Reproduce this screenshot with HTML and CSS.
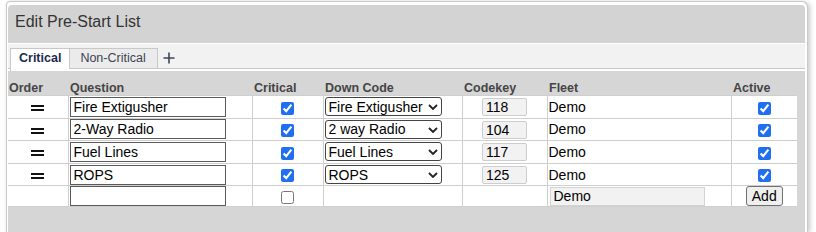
FILE: index.html
```html
<!DOCTYPE html>
<html>
<head>
<meta charset="utf-8">
<title>Edit Pre-Start List</title>
<link rel="stylesheet" href="styles.css">
</head>
<body>
<div class="dialog">
  <div class="titlebar">Edit Pre-Start List</div>
  <div class="tabbar">
    <div class="tab active">Critical</div>
    <div class="tab">Non-Critical</div>
    <div class="add-tab">
      <svg width="12" height="12" viewBox="0 0 12 12"><path d="M6 0.5V11.5M0.5 6H11.5" stroke="#3d4556" stroke-width="1.6" fill="none"/></svg>
    </div>
  </div>
  <div class="content">
    <table class="grid">
      <colgroup>
        <col class="c-order"><col class="c-question"><col class="c-critical"><col class="c-down"><col class="c-codekey"><col class="c-fleet"><col class="c-active">
      </colgroup>
      <thead>
        <tr>
          <th class="first">Order</th><th>Question</th><th>Critical</th><th>Down Code</th><th>Codekey</th><th>Fleet</th><th>Active</th>
        </tr>
      </thead>
      <tbody>
        <tr>
          <td class="center"><span class="handle"></span></td>
          <td><input class="q-input" type="text" value="Fire Extigusher"></td>
          <td class="center"><input type="checkbox" checked></td>
          <td><span class="sel"><select><option>Fire Extigusher</option></select><svg class="chev" width="10" height="6" viewBox="0 0 10 6"><path d="M1 1L5 5L9 1" stroke="#222" stroke-width="1.8" fill="none"/></svg></span></td>
          <td class="center"><input class="code" type="text" value="118" readonly></td>
          <td class="fleet">Demo</td>
          <td class="center"><input type="checkbox" checked></td>
        </tr>
        <tr>
          <td class="center"><span class="handle"></span></td>
          <td><input class="q-input" type="text" value="2-Way Radio"></td>
          <td class="center"><input type="checkbox" checked></td>
          <td><span class="sel"><select><option>2 way Radio</option></select><svg class="chev" width="10" height="6" viewBox="0 0 10 6"><path d="M1 1L5 5L9 1" stroke="#222" stroke-width="1.8" fill="none"/></svg></span></td>
          <td class="center"><input class="code" type="text" value="104" readonly></td>
          <td class="fleet">Demo</td>
          <td class="center"><input type="checkbox" checked></td>
        </tr>
        <tr>
          <td class="center"><span class="handle"></span></td>
          <td><input class="q-input" type="text" value="Fuel Lines"></td>
          <td class="center"><input type="checkbox" checked></td>
          <td><span class="sel"><select><option>Fuel Lines</option></select><svg class="chev" width="10" height="6" viewBox="0 0 10 6"><path d="M1 1L5 5L9 1" stroke="#222" stroke-width="1.8" fill="none"/></svg></span></td>
          <td class="center"><input class="code" type="text" value="117" readonly></td>
          <td class="fleet">Demo</td>
          <td class="center"><input type="checkbox" checked></td>
        </tr>
        <tr>
          <td class="center"><span class="handle"></span></td>
          <td><input class="q-input" type="text" value="ROPS"></td>
          <td class="center"><input type="checkbox" checked></td>
          <td><span class="sel"><select><option>ROPS</option></select><svg class="chev" width="10" height="6" viewBox="0 0 10 6"><path d="M1 1L5 5L9 1" stroke="#222" stroke-width="1.8" fill="none"/></svg></span></td>
          <td class="center"><input class="code" type="text" value="125" readonly></td>
          <td class="fleet">Demo</td>
          <td class="center"><input type="checkbox" checked></td>
        </tr>
        <tr class="new-row">
          <td></td>
          <td><input class="q-input" type="text" value=""></td>
          <td class="center"><input type="checkbox"></td>
          <td></td>
          <td></td>
          <td class="fleet"><input class="fleet-input" type="text" value="Demo" readonly></td>
          <td class="center"><button class="add-btn" type="button">Add</button></td>
        </tr>
      </tbody>
    </table>
  </div>
</div>
</body>
</html>
```

FILE: styles.css
```css
html, body {
  margin: 0;
  padding: 0;
  background: #ffffff;
  font-family: "Liberation Sans", Arial, Helvetica, sans-serif;
  height: 232px;
  overflow: hidden;
}

.dialog {
  margin: 1px 8px 0 6px;
  border: 1px solid #c9c9c9;
  border-bottom: none;
  border-radius: 4px 6px 0 0;
  padding: 3px 2px 0 1px;
  background: #ffffff;
  box-shadow: 2px 1px 5px rgba(0, 0, 0, 0.22);
  height: 227px;
}

.titlebar {
  height: 38px;
  line-height: 34px;
  padding-left: 7px;
  font-size: 16px;
  color: #333333;
  background: #d3d3d3;
  border-radius: 4px 4px 0 0;
}

.tabbar {
  margin-top: 1px;
  margin-bottom: 2px;
  height: 20px;
  padding: 4px 0 0 2px;
  background: #f2f2f2;
  border-bottom: 1px solid #c8c8c8;
  display: flex;
  align-items: flex-start;
}

.tab {
  height: 19px;
  line-height: 19px;
  padding: 0 11px 0 10px;
  font-size: 12.5px;
  color: #3d4352;
  background: #ebebeb;
  border: 1px solid #c8c8c8;
  border-bottom: none;
}

.tab.active {
  height: 22px;
  padding: 0 8px;
  font-weight: bold;
  color: #1d2b4d;
  background: #ffffff;
  border-right: none;
  position: relative;
  z-index: 1;
}

.add-tab {
  display: flex;
  align-items: center;
  height: 20px;
  padding-left: 5px;
}

.content {
  background: #d6d6d6;
  height: 158px;
  padding-top: 10px;
}

.grid {
  border-collapse: collapse;
  table-layout: fixed;
  width: 789px;
}

.c-order { width: 60px; }
.c-question { width: 184px; }
.c-critical { width: 71px; }
.c-down { width: 139px; }
.c-codekey { width: 85px; }
.c-fleet { width: 184px; }
.c-active { width: 66px; }

.grid th {
  font-size: 12.5px;
  font-weight: bold;
  color: #454545;
  text-align: left;
  padding: 0 0 0 2px;
  height: 14px;
  line-height: 14px;
  vertical-align: bottom;
  border: none;
}

.grid th.first {
  padding-left: 1px;
}

.grid td {
  background: #ffffff;
  border: 1px solid #cfcfcf;
  height: 21.6px;
  padding: 0;
  font-size: 14px;
  color: #000000;
  vertical-align: middle;
}

.grid tr td:first-child { border-left: none; }
.grid tr td:last-child { border-right: none; }

.grid .new-row td {
  height: 20px;
}

.center {
  text-align: center;
}

.handle {
  display: inline-block;
  width: 13px;
  height: 2px;
  border-top: 2px solid #111;
  border-bottom: 2px solid #111;
  vertical-align: middle;
}

.q-input {
  box-sizing: border-box;
  width: 156px;
  height: 20px;
  margin: 0 0 0 1px;
  padding: 0 3px;
  border: 1px solid #5a5a5a;
  font-family: "Liberation Sans", Arial, sans-serif;
  font-size: 14px;
  color: #000;
  background: #fff;
  vertical-align: middle;
}

input[type="checkbox"] {
  width: 13px;
  height: 13px;
  margin: 0;
  vertical-align: middle;
  accent-color: #1f6ff0;
}

.sel {
  position: relative;
  display: inline-block;
  vertical-align: middle;
  margin-left: 1px;
}

.sel select {
  -webkit-appearance: none;
  appearance: none;
  box-sizing: border-box;
  width: 117px;
  height: 19px;
  margin: 0;
  padding: 0 0 0 3px;
  border: 1px solid #444;
  border-radius: 3px;
  background: #fff;
  font-family: "Liberation Sans", Arial, sans-serif;
  font-size: 14px;
  color: #000;
  display: block;
}

.sel .chev {
  position: absolute;
  right: 4px;
  top: 7px;
  pointer-events: none;
}

.code {
  box-sizing: border-box;
  width: 45px;
  height: 18px;
  margin: 0;
  padding: 0 3px;
  border: 1px solid #cdcdcd;
  border-radius: 2px;
  background: #f2f2f2;
  font-family: "Liberation Sans", Arial, sans-serif;
  font-size: 14px;
  color: #000;
  vertical-align: middle;
}

.fleet {
  padding-left: 1px !important;
}

.fleet-input {
  box-sizing: border-box;
  width: 155px;
  height: 19px;
  margin: 0 0 0 1px;
  padding: 0 3px;
  border: 1px solid #d3d3d3;
  background: #f2f2f2;
  font-family: "Liberation Sans", Arial, sans-serif;
  font-size: 14px;
  color: #000;
  vertical-align: middle;
}

.add-btn {
  box-sizing: border-box;
  height: 20px;
  margin: 0;
  padding: 0 5px;
  border: 1px solid #707070;
  border-radius: 3px;
  background: #efefef;
  font-family: "Liberation Sans", Arial, sans-serif;
  font-size: 14px;
  color: #000;
  line-height: 16px;
  vertical-align: middle;
}
```
